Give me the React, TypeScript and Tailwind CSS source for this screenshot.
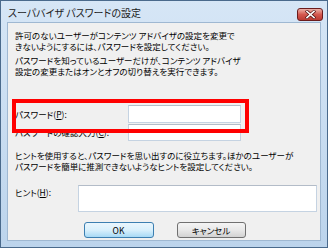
import React from "react";

function CloseButton() {
  return (
    <div className="w-[26px] h-[13px] rounded-[3px] border border-[#6b1c1c] bg-gradient-to-b from-[#eab0a8] via-[#d4584f] to-[#bc3a32] flex items-center justify-center">
      <svg width="11" height="9" viewBox="0 0 11 9">
        <path d="M2 1.5 L9 7.5 M9 1.5 L2 7.5" stroke="#5a1a1a" strokeWidth="3" strokeLinecap="square" />
        <path d="M2 1.5 L9 7.5 M9 1.5 L2 7.5" stroke="#ffffff" strokeWidth="1.6" strokeLinecap="square" />
      </svg>
    </div>
  );
}

function Input({ className }: { className: string }) {
  return (
    <div
      className={
        "bg-white border border-[#c5d3e2] border-t-[#b3bcc8] " + className
      }
    />
  );
}

export default function App() {
  return (
    <div className="relative w-[328px] h-[248px] bg-gradient-to-b from-[#d6e6f6] to-[#bcd4ec] border border-[#4a6a8c] flex flex-col text-black font-['Noto_Sans_CJK_JP','Noto_Sans',sans-serif] [font-feature-settings:'palt']">
      <div className="h-[20px] flex items-end justify-between pl-[7px] pr-[4px]">
        <span className="text-[10px] leading-[14px] text-[#1a1a1a] mb-[1px]">
          スーパバイザ パスワードの設定
        </span>
        <div>
          <CloseButton />
        </div>
      </div>
      <div className="flex-1 mt-[1px] mx-[6px] mb-[6px] bg-[#f0f0f0] border border-[#9fb8d2] flex flex-col pl-[7px] pt-[7px] text-[8.5px] leading-[11px]">
        <p>
          許可のないユーザーがコンテンツ アドバイザの設定を変更で
          <br />
          きないようにするには、パスワードを設定してください。
        </p>
        <p className="mt-[3px]">
          パスワードを知っているユーザーだけが、コンテンツ アドバイザ
          <br />
          設定の変更またはオンとオフの切り替えを実行できます。
        </p>
        <div className="mt-[28px] flex items-center h-[18px]">
          <span className="w-[113px]">
            パスワード(<span className="underline">P</span>):
          </span>
          <Input className="w-[113px] h-[18px]" />
        </div>
        <div className="mt-[1px] flex items-center h-[17px]">
          <span className="w-[113px]">
            パスワードの確認入力(<span className="underline">C</span>):
          </span>
          <Input className="w-[113px] h-[17px]" />
        </div>
        <p className="mt-[9px]">
          ヒントを使用すると、パスワードを思い出すのに役立ちます。ほかのユーザーが
          <br />
          パスワードを簡単に推測できないようなヒントを設定してください。
        </p>
        <div className="mt-[13px] flex items-start">
          <span className="w-[63px] pt-[2px]">
            ヒント(<span className="underline">H</span>):
          </span>
          <Input className="w-[239px] h-[27px]" />
        </div>
        <div className="mt-[10px] flex justify-center gap-[23px] pr-[6px]">
          <button className="w-[70px] h-[16px] rounded-[3px] border border-[#3c7fb1] bg-gradient-to-b from-[#eaf6fd] via-[#d9f0fc] to-[#a7d9f5] text-[8.5px] leading-[14px]">
            OK
          </button>
          <button className="w-[69px] h-[16px] rounded-[3px] border border-[#707070] bg-gradient-to-b from-[#f4f4f4] via-[#e8e8e8] to-[#d2d2d2] text-[8.5px] leading-[14px]">
            キャンセル
          </button>
        </div>
      </div>
      <div className="absolute left-[11px] top-[98px] w-[237px] h-[34px] border-[4px] border-[#ff0000] pointer-events-none" />
    </div>
  );
}
